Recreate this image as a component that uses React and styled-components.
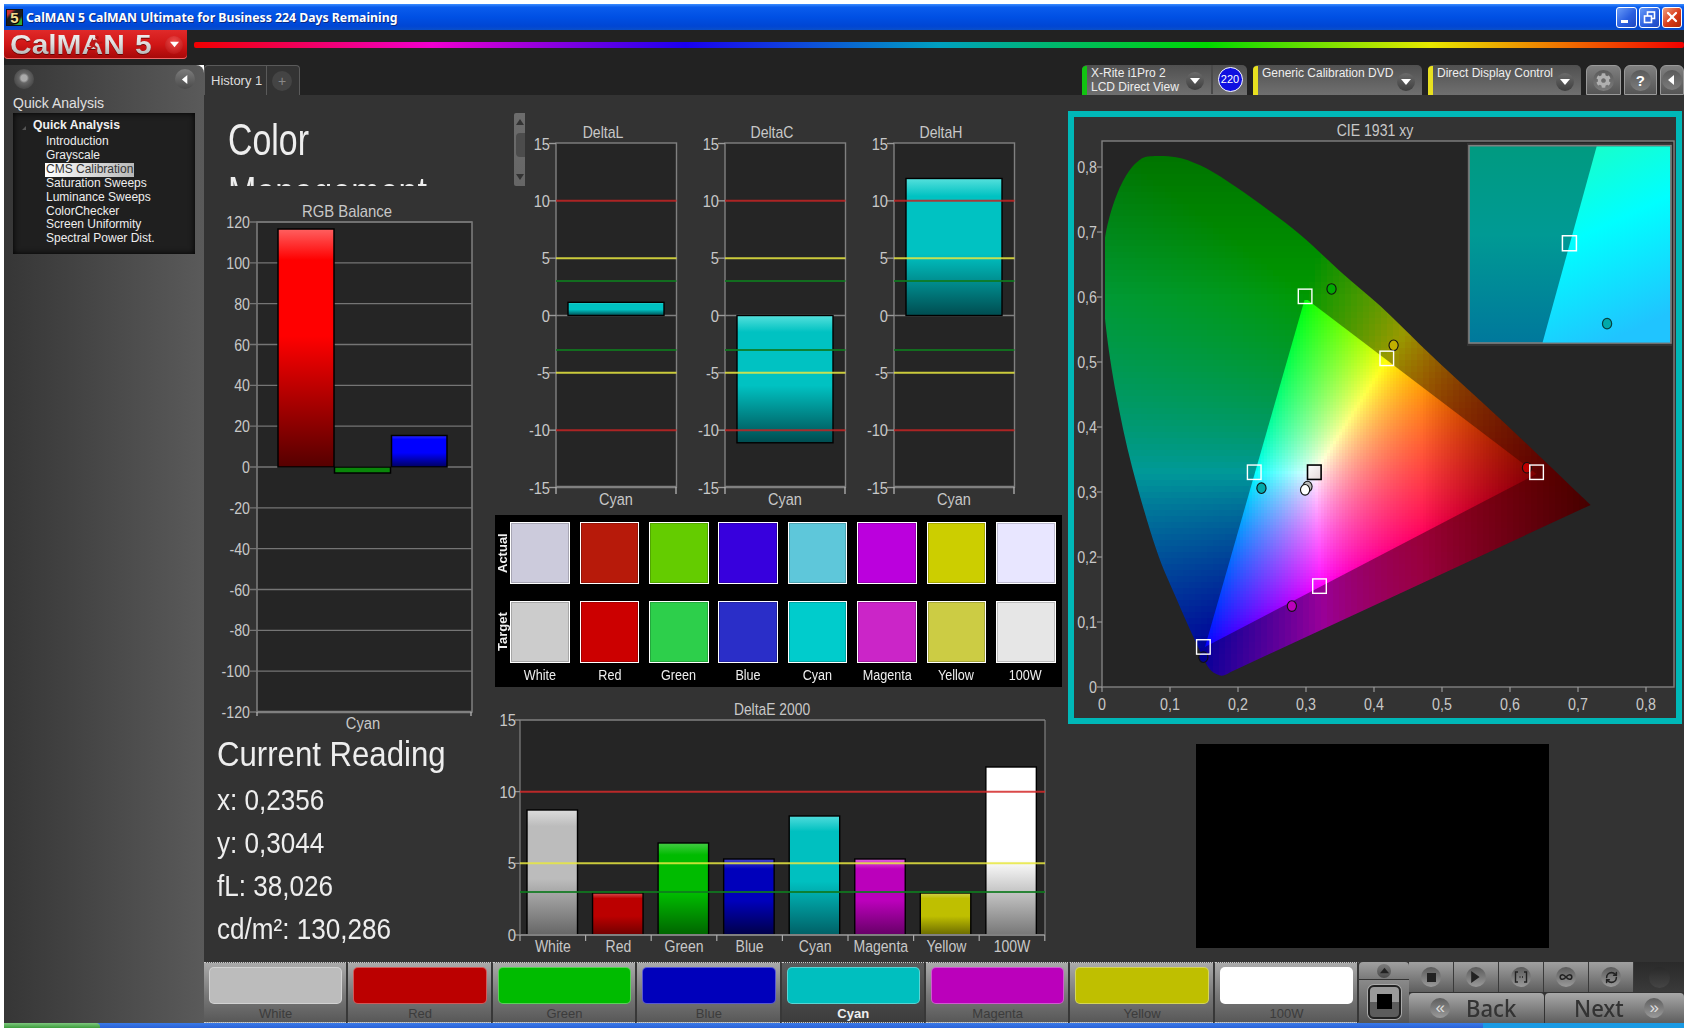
import React, { useMemo } from "react";
import styled, { createGlobalStyle } from "styled-components";
import { Infinity as InfinityIcon, RefreshCw, X } from "lucide-react";
import { FaCog } from "react-icons/fa";

const GlobalStyle = createGlobalStyle`
  html, body { margin: 0; padding: 0; background: #fff; }
  * { box-sizing: border-box; }
  body { font-family: "Liberation Sans", Arial, sans-serif; }
`;

const Page = styled.div`
  width: 1688px;
  height: 1028px;
  padding: 4px 4px 0;
  display: flex;
  flex-direction: column;
  background: #fff;
  overflow: hidden;
`;

const TitleBar = styled.div`
  height: 26px;
  flex: none;
  display: flex;
  align-items: center;
  padding: 0 2px 0 2px;
  background: linear-gradient(#3b8cff 0, #0a5cec 12%, #0050e4 50%, #0046d4 85%, #0a4fc8 100%);
`;

const AppIcon = styled.div`
  width: 17px;
  height: 17px;
  margin-right: 3px;
  background: linear-gradient(135deg, #c33 0 18%, #1c1c1c 32% 68%, #3a3 82% 100%);
  border: 1px solid #111;
  color: #f2dc90;
  font: 700 15px/15px "Liberation Sans", sans-serif;
  text-align: center;
  text-shadow: 1px 1px 0 #000;
`;

const TitleText = styled.div`
  flex: 1;
  color: #fff;
  font: 700 12.25px "Noto Sans", sans-serif;
  text-shadow: 1px 1px 0 #0a2a80;
  white-space: nowrap;
`;

const WinButton = styled.div`
  width: ${(p) => p.$w}px;
  height: 21px;
  margin-left: 2px;
  border: 1px solid #fff;
  border-radius: 3px;
  display: flex;
  align-items: center;
  justify-content: center;
  color: #fff;
  background: ${(p) => (p.$close ? "linear-gradient(135deg,#f0a080,#d83a18 55%,#b02808)" : "linear-gradient(135deg,#6a9cf8,#2a5fe0 55%,#2048c0)")};
`;

const LogoRow = styled.div`
  height: 35px;
  flex: none;
  display: flex;
  background: #222;
`;

const Logo = styled.div`
  width: 183px;
  height: 29px;
  display: flex;
  align-items: center;
  position: relative;
  padding-left: 6px;
  border-radius: 0 0 4px 4px;
  background: linear-gradient(#e02a2a, #d01616 50%, #a40808);
  box-shadow: inset 0 -1px 0 #e66;
`;

const LogoText = styled.div`
  width: ${(p) => p.$w}px;
  font: 700 28px/29px "Liberation Sans", sans-serif;
  white-space: nowrap;
  transform-origin: left center;
  transform: scaleX(1.07);
  background: linear-gradient(#f4f4f4, #e0e0e0 45%, #a8a8a8);
  -webkit-background-clip: text;
  background-clip: text;
  color: transparent;
  filter: drop-shadow(0 1px 0 rgba(90, 0, 0, 0.8));
`;

const LogoRunner = styled.svg`
  position: absolute;
  left: 83px;
  top: 5px;
`;

const LogoKnob = styled.div`
  width: 18px;
  height: 18px;
  margin-left: 10px;
  border-radius: 50%;
  background: radial-gradient(circle at 50% 30%, #f04a4a, #b00a0a);
  display: flex;
  align-items: center;
  justify-content: center;
`;

const Rainbow = styled.div`
  flex: 1;
  height: 6px;
  margin: 12px 0 0 7px;
  border-radius: 2px;
  background: linear-gradient(90deg, #f00000, #f000d0 16%, #1a00f0 33%, #00a0c0 50%, #00d800 68%, #e8e800 83%, #f07000 92%, #f00000);
`;

const Body = styled.div`
  flex: 1;
  display: flex;
  min-height: 0;
`;

const LeftPanel = styled.div`
  width: 200px;
  flex: none;
  padding: 4px 9px 0;
  border-radius: 0 8px 0 0;
  background: linear-gradient(90deg, #363636, #5a5a5a);
`;

const PanelTop = styled.div`
  height: 20px;
  display: flex;
  justify-content: space-between;
`;

const Knob = styled.div`
  width: ${(p) => p.$size || 20}px;
  height: ${(p) => p.$size || 20}px;
  flex: none;
  border-radius: 50%;
  display: flex;
  align-items: center;
  justify-content: center;
  background: linear-gradient(#7c7c7c, #4a4a4a);
  color: ${(p) => p.$ink || "#fff"};
`;

const PanelDot = styled(Knob)`
  background: radial-gradient(circle at 50% 45%, #aaa 0 3px, #666 5px, #4c4c4c 10px);
  margin-left: 1px;
`;

const PanelLabel = styled.div`
  margin-top: 5px;
  color: #e0e0e0;
  font-size: 14px;
  line-height: 18px;
`;

const TreeBox = styled.div`
  width: 182px;
  height: 141px;
  margin-top: 1px;
  padding: 2px 0 0 20px;
  background: #1f1f1f;
  box-shadow: inset 0 0 6px #000;
  position: relative;
`;

const TreeHead = styled.div`
  color: #f0f0f0;
  font-size: 12.2px;
  font-weight: 700;
  line-height: 20px;
  &::before {
    content: "";
    position: absolute;
    left: 9px;
    top: 13px;
    border-left: 4px solid transparent;
    border-bottom: 4px solid #555;
  }
`;

const TreeItem = styled.div`
  width: fit-content;
  margin-left: 12px;
  padding: 0 1px;
  color: ${(p) => (p.$on ? "#333" : "#eee")};
  font-size: 12px;
  line-height: 13.9px;
  white-space: nowrap;
  background: ${(p) => (p.$on ? "linear-gradient(90deg,#fff,#b8b8b8)" : "none")};
`;

const Main = styled.div`
  flex: 1;
  min-width: 0;
  display: flex;
  flex-direction: column;
`;

const TabStrip = styled.div`
  height: 30px;
  flex: none;
  display: flex;
  background: #222;
`;

const HistoryTab = styled.div`
  width: 96px;
  margin-right: 782px;
  display: flex;
  align-items: center;
  border: 1px solid #5a5a5a;
  border-bottom: 0;
  border-radius: 4px 4px 0 0;
  background: #333;
`;

const HistoryLabel = styled.div`
  width: 62px;
  height: 100%;
  padding-left: 6px;
  border-right: 1px solid #5a5a5a;
  color: #ddd;
  font-size: 13px;
  line-height: 30px;
  white-space: nowrap;
`;

const PlusKnob = styled(Knob)`
  margin-left: 5px;
  background: #444;
  color: #888;
  font-size: 14px;
`;

const DeviceTab = styled.div`
  width: ${(p) => p.$w}px;
  margin-right: 6px;
  padding: 1px 0 0 9px;
  display: flex;
  position: relative;
  border-radius: 5px 5px 0 0;
  background: linear-gradient(#505050, #707070);
  color: #eee;
  font-size: 12px;
  line-height: 14px;
  &::before {
    content: "";
    position: absolute;
    left: 0;
    top: 1px;
    bottom: 0;
    width: 5px;
    border-radius: 4px 0 0 0;
    background: ${(p) => p.$bar};
  }
`;

const DeviceText = styled.div`
  flex: 1;
  white-space: nowrap;
`;

const DeviceKnob = styled(Knob)`
  margin: ${(p) => p.$top || 6}px 7px 0 0;
  background: linear-gradient(#6a6a6a, #3e3e3e);
`;

const CountCell = styled.div`
  width: 36px;
  flex: none;
  height: 100%;
  margin-top: -1px;
  border-left: 2px solid #4a4a4a;
  display: flex;
  align-items: center;
  justify-content: center;
`;

const CountBadge = styled.div`
  width: 25px;
  height: 25px;
  border-radius: 50%;
  border: 1px solid #fff;
  background: #1010e0;
  color: #fff;
  font-size: 11px;
  line-height: 23px;
  text-align: center;
`;

const ToolButton = styled.div`
  width: ${(p) => p.$w}px;
  margin-left: ${(p) => p.$gap}px;
  display: flex;
  align-items: center;
  justify-content: center;
  border: 1px solid #9a9a9a;
  border-radius: 6px 6px 0 0;
  background: linear-gradient(#808080, #555);
`;

const ToolKnob = styled(Knob)`
  background: linear-gradient(#5a5a5a, #7c7c7c);
  font-size: 15px;
  font-weight: 700;
`;

const Content = styled.div`
  flex: 1;
  min-height: 0;
  display: grid;
  grid-template-columns: 286px 576px 1fr;
  background: #333;
`;

const Column = styled.div`
  display: flex;
  flex-direction: column;
  min-width: 0;
`;

const Squeezed = styled.span`
  display: inline-block;
  white-space: nowrap;
  transform-origin: ${(p) => p.$origin || "left"} center;
  transform: scaleX(${(p) => p.$sx});
`;

const Heading = styled.div`
  height: 73px;
  margin-top: 18px;
  padding-left: 24px;
  overflow: hidden;
  color: #eee;
  font-size: 44px;
  font-weight: 400;
  line-height: 53px;
`;

const ReadingTitle = styled.div`
  padding-left: 13px;
  margin-top: 1px;
  color: #eee;
  font-size: 35px;
  line-height: 36px;
`;

const ReadingLine = styled.div`
  height: 43px;
  padding-left: 13px;
  color: #eee;
  font-size: 29px;
  line-height: 43px;
`;

const Readings = styled.div`
  margin-top: 7px;
`;

const DeltaRow = styled.div`
  height: 420px;
  display: flex;
  align-items: flex-start;
`;

const ScrollThumb = styled.div`
  width: 11px;
  height: 73px;
  margin: 18px 0 0 24px;
  flex: none;
  border-radius: 2px 0 0 2px;
  background: linear-gradient(#6c6c6c, #666);
  display: flex;
  flex-direction: column;
  align-items: center;
  justify-content: space-between;
  padding: 6px 0;
  position: relative;
  &::after {
    content: "";
    position: absolute;
    left: 2px;
    top: 20px;
    width: 9px;
    height: 24px;
    border-radius: 4px 0 0 4px;
    background: #4c4c4c;
  }
`;

const ScrollArrow = styled.div`
  border-left: 4px solid transparent;
  border-right: 4px solid transparent;
  border-bottom: ${(p) => (p.$up ? "6px solid #333" : "0")};
  border-top: ${(p) => (p.$up ? "0" : "6px solid #333")};
`;

const ChartSvg = styled.svg`
  display: block;
  flex: none;
`;

const ChartLabel = styled.text`
  fill: #c8c8c8;
  font-family: "Liberation Sans", sans-serif;
`;

const SwatchPanel = styled.div`
  width: 567px;
  height: 172px;
  margin-left: 5px;
  padding-top: 7px;
  display: grid;
  grid-template-columns: 15.3px 1fr;
  background: #000;
`;

const RowLabels = styled.div`
  display: grid;
  grid-template-rows: 62px 62px;
  row-gap: 17px;
`;

const RowLabel = styled.div`
  writing-mode: vertical-rl;
  transform: rotate(180deg);
  color: #eee;
  font-size: 13px;
  font-weight: 700;
  line-height: 15px;
  text-align: center;
`;

const SwatchGrid = styled.div`
  display: grid;
  grid-template-columns: repeat(8, 59.5px);
  grid-template-rows: 62px 62px 20px;
  column-gap: 9.9px;
  row-gap: 17px;
`;

const Swatch = styled.div`
  border: 1px solid #fff;
  box-shadow: inset 0 0 0 1px rgba(0, 0, 0, 0.18);
  background: ${(p) => p.$c};
`;

const SwatchName = styled.div`
  margin-top: -15px;
  height: 20px;
  color: #eee;
  font-size: 14px;
  line-height: 20px;
  display: flex;
  justify-content: center;
`;

const CieFrame = styled.div`
  width: 613.5px;
  height: 613px;
  margin: 16px 0 0 2px;
  border: 6px solid #00b8b8;
`;

const VideoBox = styled.div`
  width: 353px;
  height: 204px;
  margin: 20px 0 0 130px;
  background: #000;
`;

const BottomBar = styled.div`
  height: 61px;
  flex: none;
  display: flex;
  background: #333;
`;

const PatchButton = styled.div`
  width: 144.4px;
  flex: none;
  padding: 4px 4px 0 5px;
  border-top: 1px dotted #ccc;
  border-bottom: 1px dotted #ccc;
  border-right: 2px solid #383838;
  background: ${(p) => (p.$on ? "linear-gradient(#5c5c5c, #3c3c3c)" : "linear-gradient(#aaa, #787878 55%, #585858)")};
`;

const PatchColor = styled.div`
  height: 37px;
  border-radius: 5px;
  border: 1px solid rgba(255, 255, 255, 0.35);
  background: ${(p) => p.$c};
`;

const PatchName = styled.div`
  height: 19px;
  color: ${(p) => (p.$on ? "#eee" : "#3c3c3c")};
  font-size: 13px;
  font-weight: ${(p) => (p.$on ? 700 : 400)};
  line-height: 19px;
  display: flex;
  justify-content: center;
`;

const ModeColumn = styled.div`
  width: 50px;
  flex: none;
  display: flex;
  flex-direction: column;
`;

const ModeTop = styled.div`
  height: 18px;
  display: flex;
  align-items: center;
  justify-content: center;
  border-radius: 4px 4px 0 0;
  background: linear-gradient(#a0a0a0, #7a7a7a);
  border-bottom: 1px solid #333;
`;

const ModeBottom = styled.div`
  flex: 1;
  display: flex;
  align-items: center;
  justify-content: center;
  background: linear-gradient(#8a8a8a, #555);
`;

const StopFrame = styled.div`
  width: 33px;
  height: 34px;
  border: 2px solid #222;
  border-radius: 6px;
  background: linear-gradient(#9a9a9a 0 50%, #5c5c5c 50% 100%);
  box-shadow: 0 0 0 1px #aaa;
  display: flex;
  align-items: center;
  justify-content: center;
  &::after {
    content: "";
    width: 15px;
    height: 15px;
    background: #000;
  }
`;

const Transport = styled.div`
  flex: 1;
  display: flex;
  flex-direction: column;
`;

const TransportTop = styled.div`
  height: 30px;
  display: flex;
`;

const TransportButton = styled.div`
  width: 45px;
  display: flex;
  align-items: center;
  justify-content: center;
  border-right: 1px solid #3a3a3a;
  background: linear-gradient(#a0a0a0, #5e5e5e);
`;

const TransportKnob = styled(Knob)`
  background: linear-gradient(#5a5a5a, #9a9a9a);
`;

const TransportSlot = styled.div`
  flex: 1;
  display: flex;
  align-items: center;
  justify-content: center;
  background: linear-gradient(#2a2a2a, #3a3a3a);
`;

const SlotDot = styled.div`
  width: 21px;
  height: 21px;
  border-radius: 50%;
  background: linear-gradient(#2a2a2a, #454545);
`;

const NavRow = styled.div`
  flex: 1;
  display: flex;
  gap: 1px;
  margin-top: 1px;
`;

const NavButton = styled.div`
  width: ${(p) => p.$w}px;
  display: flex;
  align-items: center;
  padding-left: ${(p) => p.$pad}px;
  border-radius: 4px 4px 0 0;
  background: linear-gradient(#a8a8a8, #5e5e5e);
  color: #333;
  font: 500 24px/30px "Noto Sans", sans-serif;
`;

const NavKnob = styled(Knob)`
  background: linear-gradient(#5e5e5e, #9a9a9a);
  color: #ddd;
  font: 400 17px/18px "Liberation Sans", sans-serif;
`;

const NavLabel = styled(Squeezed)`
  width: ${(p) => p.$w}px;
  margin-left: ${(p) => p.$left || 0}px;
`;

const TaskBar = styled.div`
  height: 5px;
  flex: none;
  display: flex;
  background: linear-gradient(#3a7ae8, #2a62d8);
`;

const StartButton = styled.div`
  width: 96px;
  background: linear-gradient(#7ec87e, #3c9c3c);
  border-radius: 0 4px 0 0;
`;

const TaskGap = styled.div`
  flex: 1;
`;

const TrayArea = styled.div`
  width: 201px;
  background: #1a9ae4;
`;

const Arrow = ({ dir = "left", size = 8, color = "#fff" }) => {
  const pts = {
    left: "7,0 7,10 1,5",
    right: "1,0 1,10 8,5",
    down: "0,2 10,2 5,8",
    up: "0,8 10,8 5,2",
  };
  return (
    <svg width={size} height={size} viewBox="0 0 10 10">
      <polygon points={pts[dir]} fill={color} />
    </svg>
  );
};

// svg text, narrowed a little like the charts in the app
const Txt = ({ x, y, sx = 0.88, size = 15, anchor = "middle", children }) => (
  <ChartLabel transform={`translate(${x} ${y}) scale(${sx} 1)`} textAnchor={anchor} fontSize={size}>
    {children}
  </ChartLabel>
);

const BarGradient = ({ id, hi, c, lo, mid = 0.55 }) => (
  <linearGradient id={id} x1="0" y1="0" x2="0" y2="1">
    <stop offset="0" stopColor={hi} />
    <stop offset="0.13" stopColor={c} />
    <stop offset={mid} stopColor={c} />
    <stop offset="1" stopColor={lo} />
  </linearGradient>
);

const CYAN = { hi: "#55e0dc", c: "#00c2c2", lo: "#004c50" };

const rgbTicks = [120, 100, 80, 60, 40, 20, 0, -20, -40, -60, -80, -100, -120];

const RgbChart = () => {
  const y = (v) => 467 - (v / 120) * 245;
  return (
    <ChartSvg width="286" height="549" viewBox="204 186 286 549">
      <defs>
        <BarGradient id="rgbRed" hi="#ff6060" c="#ff0000" lo="#550000" mid={0.45} />
        <BarGradient id="rgbBlue" hi="#2a2aff" c="#0000ff" lo="#000060" />
      </defs>
      <Txt x={347} y={217} sx={0.93} size={16}>RGB Balance</Txt>
      <rect x="257" y="222" width="215" height="490" fill="#252525" stroke="#808080" strokeWidth="1.5" />
      {rgbTicks.map((t) => (
        <g key={t}>
          <line x1="250" x2="472" y1={y(t)} y2={y(t)} stroke="#757575" strokeWidth="1.4" />
          <Txt x={250} y={y(t) + 6} sx={0.86} size={16.5} anchor="end">{t}</Txt>
        </g>
      ))}
      <line x1="257" x2="472" y1="712" y2="712" stroke="#808080" strokeWidth="2.4" />
      <line x1="257" x2="257" y1="712" y2="716" stroke="#aaa" strokeWidth="1.4" />
      <line x1="471" x2="471" y1="712" y2="716" stroke="#aaa" strokeWidth="1.4" />
      <rect x="278" y="229" width="56" height="238" fill="url(#rgbRed)" stroke="#000" strokeWidth="1.5" />
      <rect x="334.5" y="467" width="56" height="6" fill="#0a860a" stroke="#000" strokeWidth="1.5" />
      <rect x="391.5" y="435.5" width="55.5" height="31.5" fill="url(#rgbBlue)" stroke="#000" strokeWidth="1.5" />
      <Txt x={363} y={729} sx={0.92} size={16}>Cyan</Txt>
    </ChartSvg>
  );
};

const deltaTicks = [15, 10, 5, 0, -5, -10, -15];

const Limit = ({ x1, x2, y, color }) => <line x1={x1} x2={x2} y1={y} y2={y} stroke={color} strokeWidth="2" opacity="0.85" />;

const DeltaChart = ({ name, value }) => {
  const y = (v) => 315.5 - (v / 15) * 172;
  const top = Math.min(y(value), y(0));
  const h = Math.abs(y(value) - y(0));
  const id = `bar${name}`;
  return (
    <ChartSvg width="169" height="420" viewBox="0 95 169 420">
      <defs>
        <BarGradient id={id} {...CYAN} />
      </defs>
      <Txt x={78} y={137.5} size={16}>{name}</Txt>
      <rect x="31" y="143" width="120.5" height="344" fill="#252525" stroke="#808080" strokeWidth="1.4" />
      {deltaTicks.map((t) => (
        <g key={t}>
          <line x1="24" x2="31" y1={y(t)} y2={y(t)} stroke="#999" strokeWidth="1.4" />
          <Txt x={25} y={y(t) + 6} size={17} sx={0.86} anchor="end">{t}</Txt>
        </g>
      ))}
      <line x1="31" x2="151.5" y1={y(0)} y2={y(0)} stroke="#808080" strokeWidth="1.4" />
      <rect x="43" y={top} width="96" height={h} fill={`url(#${id})`} stroke="#000" strokeWidth="1.4" />
      <Limit x1={31} x2={151.5} y={y(10)} color="#c42424" />
      <Limit x1={31} x2={151.5} y={y(-10)} color="#c42424" />
      <Limit x1={31} x2={151.5} y={y(5)} color="#e8e840" />
      <Limit x1={31} x2={151.5} y={y(-5)} color="#e8e840" />
      <Limit x1={31} x2={151.5} y={y(3)} color="#0f7a1f" />
      <Limit x1={31} x2={151.5} y={y(-3)} color="#0f7a1f" />
      <line x1="31" x2="151.5" y1="487" y2="487" stroke="#808080" strokeWidth="2.4" />
      <line x1="31" x2="31" y1="487" y2="494" stroke="#aaa" strokeWidth="1.4" />
      <line x1="151" x2="151" y1="487" y2="494" stroke="#aaa" strokeWidth="1.4" />
      <Txt x={91} y={505} size={16.5} sx={0.88}>Cyan</Txt>
    </ChartSvg>
  );
};

const deltaEBars = [
  { name: "White", top: 810, hi: "#dcdcdc", c: "#bcbcbc", lo: "#666" },
  { name: "Red", top: 893, hi: "#d85050", c: "#bb0000", lo: "#700000" },
  { name: "Green", top: 843, hi: "#44cc44", c: "#00bb00", lo: "#006400" },
  { name: "Blue", top: 859, hi: "#4444cc", c: "#0000bb", lo: "#000048" },
  { name: "Cyan", top: 816, hi: "#50dcdc", c: "#00c0c0", lo: "#006066" },
  { name: "Magenta", top: 859, hi: "#e060e0", c: "#bb00bb", lo: "#660066" },
  { name: "Yellow", top: 893, hi: "#d0d050", c: "#bfbf00", lo: "#6a6a00" },
  { name: "100W", top: 767, hi: "#ffffff", c: "#ffffff", lo: "#777" },
];

const DeltaEChart = () => {
  const y = (v) => 935 - (v / 15) * 215;
  return (
    <ChartSvg width="576" height="275" viewBox="490 687 576 275">
      <defs>
        {deltaEBars.map((b) => (
          <BarGradient key={b.name} id={`de${b.name}`} hi={b.hi} c={b.c} lo={b.lo} />
        ))}
      </defs>
      <Txt x={772} y={715} size={16.5} sx={0.84}>DeltaE 2000</Txt>
      <rect x="520" y="720" width="525" height="215" fill="#252525" />
      <line x1="520" x2="1045" y1="720" y2="720" stroke="#808080" strokeWidth="1.6" />
      <line x1="1045" x2="1045" y1="720" y2="935" stroke="#808080" strokeWidth="1.2" />
      <line x1="520" x2="520" y1="720" y2="935" stroke="#808080" strokeWidth="1.2" />
      {[15, 10, 5, 0].map((t) => (
        <g key={t}>
          <line x1="515" x2="520" y1={y(t)} y2={y(t)} stroke="#999" strokeWidth="1.2" />
          <Txt x={516} y={y(t) + 6} size={16.5} sx={0.9} anchor="end">{t}</Txt>
        </g>
      ))}
      {deltaEBars.map((b, i) => {
        const x = 527 + i * 65.55;
        return (
          <g key={b.name}>
            <rect x={x} y={b.top} width="50.5" height={935 - b.top} fill={`url(#de${b.name})`} stroke="#000" strokeWidth="1.4" />
            <Txt x={552.8 + i * 65.6} y={951.5} size={16.5} sx={0.85}>{b.name}</Txt>
          </g>
        );
      })}
      <Limit x1={520} x2={1045} y={y(10)} color="#d42a2a" />
      <Limit x1={520} x2={1045} y={y(5)} color="#e8e840" />
      <Limit x1={520} x2={1045} y={y(3)} color="#0f7a1f" />
      <line x1="520" x2="1045" y1="935" y2="935" stroke="#808080" strokeWidth="2" />
      {Array.from({ length: 9 }).map((_, i) => (
        <line key={i} x1={520 + i * 65.6} x2={520 + i * 65.6} y1="935" y2="941" stroke="#aaa" strokeWidth="1.2" />
      ))}
    </ChartSvg>
  );
};

// chart coordinates on the page
const cx = (x) => 1102 + 680 * x;
const cy = (y) => 687 - 650 * y;
// spots read off the reference, in fractions of the chart
const zx = (v) => (1060 + v / 2.497 - 1102) / 680;
const zy = (v) => (687 - (100 + v / 2.45)) / 650;

const locusTrace = [
  [400, 1410], [372, 1392], [340, 1330], [290, 1220], [240, 1100], [180, 900], [140, 720], [115, 560],
  [108, 440], [112, 340], [135, 250], [165, 185], [195, 150], [225, 138], [290, 140], [350, 160],
  [420, 200], [500, 255], [600, 330], [700, 420], [800, 505], [900, 600], [1000, 692], [1100, 782],
  [1200, 875], [1325, 992],
].map(([a, b]) => [cx(zx(a)), cy(zy(b))]);

const smoothPath = (pts) => {
  let d = `M${pts[0][0]} ${pts[0][1]}`;
  for (let i = 0; i < pts.length - 1; i++) {
    const p0 = pts[Math.max(i - 1, 0)];
    const p1 = pts[i];
    const p2 = pts[i + 1];
    const p3 = pts[Math.min(i + 2, pts.length - 1)];
    d += `C${p1[0] + (p2[0] - p0[0]) / 6} ${p1[1] + (p2[1] - p0[1]) / 6} ${p2[0] - (p3[0] - p1[0]) / 6} ${p2[1] - (p3[1] - p1[1]) / 6} ${p2[0]} ${p2[1]}`;
  }
  // straight line of purples back to the start, with a small rounded foot
  const foot = [cx(zx(425)), cy(zy(1402))];
  return `${d}L${foot[0]} ${foot[1]}Q${cx(zx(410))} ${cy(zy(1412))} ${pts[0][0]} ${pts[0][1]}Z`;
};

const gamut = [
  [zx(612), zy(485)],
  [zx(1190), zy(916)],
  [zx(362), zy(1340)],
];

const inGamut = (x, y, pad = 0.006) => {
  const [a, b, c] = gamut;
  const side = (p, q) => ((q[0] - p[0]) * (y - p[1]) - (q[1] - p[1]) * (x - p[0])) / Math.hypot(q[0] - p[0], q[1] - p[1]);
  const s = [side(a, b), side(b, c), side(c, a)];
  return s.every((v) => v > -pad) || s.every((v) => v < pad);
};

const chroma = (x, y, inside) => {
  const z = 1 - x - y;
  const r = Math.max(3.24 * x - 1.54 * y - 0.5 * z, 0);
  const g = Math.max(-0.97 * x + 1.88 * y + 0.04 * z, 0);
  const b = Math.max(0.056 * x - 0.2 * y + 1.06 * z, 0);
  const m = Math.max(r, g, b, 0.001);
  let k = 1;
  if (x > 0.47) k *= 1 - (x - 0.47) * (inside ? 3 : 2.2);
  if (!inside) {
    k *= 0.6;
    if (y > 0.6) k *= 1 - (y - 0.6) * 1.1;
  }
  const ch = (v) => Math.round(Math.pow(v / m, 0.8) * k * 255);
  return `rgb(${ch(r)},${ch(g)},${ch(b)})`;
};

const buildCells = () => {
  const cells = [];
  for (let py = 150; py < 684; py += 6) {
    for (let px = 1105; px < 1595; px += 6) {
      const x = (px + 3 - 1102) / 680;
      const y = (687 - (py + 3)) / 650;
      if (x + y > 1.06) continue;
      cells.push(<rect key={`o${px}-${py}`} x={px} y={py} width="6.4" height="6.4" fill={chroma(x, y, false)} />);
    }
  }
  const inner = [];
  for (let py = 300; py < 650; py += 3) {
    for (let px = 1195; px < 1545; px += 3) {
      const x = (px + 1.5 - 1102) / 680;
      const y = (687 - (py + 1.5)) / 650;
      if (!inGamut(x, y)) continue;
      inner.push(<rect key={`i${px}-${py}`} x={px} y={py} width="3.4" height="3.4" fill={chroma(x, y, true)} />);
    }
  }
  return { cells, inner };
};

const squares = [
  [612, 481], [816, 633], [485, 912], [1190, 912], [648, 1191], [358, 1340],
];

const dots = [
  [678, 463, "#00aa00"], [833, 601, "#c0b000"], [503, 951, "#00aaaa"], [1166, 901, "#bb0000"],
  [579, 1240, "#bb00bb"], [358, 1365, "#000090"], [618, 947, "#bbbbbb"], [612, 955, "#ffffff"],
];

const rx = (v) => 1060 + v / 2.497;
const ry = (v) => 100 + v / 2.45;

const CieChart = () => {
  const { cells, inner } = useMemo(buildCells, []);
  const triPoints = gamut.map(([x, y]) => `${cx(x)},${cy(y)}`).join(" ");
  return (
    <ChartSvg width="601.5" height="601" viewBox="1074 117 601.5 601">
      <defs>
        <clipPath id="locus">
          <path d={smoothPath(locusTrace)} />
        </clipPath>
        <clipPath id="gamut">
          <polygon points={triPoints} />
        </clipPath>
        <linearGradient id="insetDark" x1="0" y1="0" x2="0" y2="1">
          <stop offset="0" stopColor="#009a80" />
          <stop offset="0.45" stopColor="#009a94" />
          <stop offset="1" stopColor="#00789c" />
        </linearGradient>
        <linearGradient id="insetBright" x1="0.2" y1="0" x2="0.5" y2="1">
          <stop offset="0" stopColor="#1affc4" />
          <stop offset="0.45" stopColor="#00ffff" />
          <stop offset="1" stopColor="#20c4ff" />
        </linearGradient>
        <linearGradient id="whiteSquare" x1="0" y1="0" x2="1" y2="1">
          <stop offset="0" stopColor="#fff" />
          <stop offset="1" stopColor="#e4d8d8" />
        </linearGradient>
      </defs>
      <Txt x={1375} y={136} size={16} sx={0.88}>CIE 1931 xy</Txt>
      <rect x="1102" y="141" width="572" height="546" fill="#252525" stroke="#808080" strokeWidth="1.4" />
      {[0, 1, 2, 3, 4, 5, 6, 7, 8].map((t) => {
        const label = t === 0 ? "0" : `0,${t}`;
        return (
          <g key={t}>
            <line x1="1097" x2="1102" y1={cy(t / 10)} y2={cy(t / 10)} stroke="#999" strokeWidth="1.2" />
            <Txt x={1097} y={cy(t / 10) + 6} size={17} sx={0.84} anchor="end">{label}</Txt>
            <line x1={cx(t / 10)} x2={cx(t / 10)} y1="687" y2="692" stroke="#999" strokeWidth="1.2" />
            <Txt x={cx(t / 10)} y={710} size={17} sx={0.84}>{label}</Txt>
          </g>
        );
      })}
      <g clipPath="url(#locus)" shapeRendering="crispEdges">{cells}</g>
      <g clipPath="url(#gamut)" shapeRendering="crispEdges">{inner}</g>

      <rect x="1467" y="143" width="205" height="203" fill="#333" />
      <rect x="1469" y="145.7" width="202" height="197.3" fill="url(#insetDark)" stroke="#808080" strokeWidth="1.6" />
      <polygon points={`${rx(1340)},146.5 1670,146.5 1670,342.5 ${rx(1205)},342.5`} fill="url(#insetBright)" />
      <rect x={rx(1272) - 7} y={ry(351) - 7.5} width="14" height="15" fill="none" stroke="#fff" strokeWidth="1.5" />
      <ellipse cx={rx(1366)} cy={ry(548)} rx="4.6" ry="5.3" fill="#00aaaa" stroke="#064040" strokeWidth="1.2" />

      {dots.map(([a, b, c]) => (
        <ellipse key={`${a}-${b}`} cx={rx(a)} cy={ry(b)} rx="4.6" ry="5.3" fill={c} stroke="#111" strokeWidth="1.1" />
      ))}
      {squares.map(([a, b]) => (
        <rect key={`${a}-${b}`} x={rx(a) - 6.8} y={ry(b) - 7.2} width="13.6" height="14.4" fill="none" stroke="#fff" strokeWidth="1.4" />
      ))}
      <rect x={rx(635) - 6.8} y={ry(912) - 7.2} width="13.6" height="14.4" fill="url(#whiteSquare)" stroke="#000" strokeWidth="1.6" />
    </ChartSvg>
  );
};

const actual = ["#cccbdc", "#b71a0a", "#64cc00", "#3700dd", "#5ec7da", "#bb00dd", "#ccce00", "#e8e6ff"];
const target = ["#cccccc", "#cc0000", "#2dcf4b", "#2a2ec8", "#00cccc", "#cb25c8", "#cccc44", "#e6e6e6"];
const patchNames = ["White", "Red", "Green", "Blue", "Cyan", "Magenta", "Yellow", "100W"];
const patchColors = ["#bcbcbc", "#bb0000", "#00bb00", "#0000bb", "#00bfbf", "#bb00bb", "#bfbf00", "#ffffff"];
const steps = ["Introduction", "Grayscale", "CMS Calibration", "Saturation Sweeps", "Luminance Sweeps", "ColorChecker", "Screen Uniformity", "Spectral Power Dist."];
const readings = ["x: 0,2356", "y: 0,3044", "fL: 38,026", "cd/m²: 130,286"];

export default function App() {
  return (
    <Page>
      <GlobalStyle />
      <TitleBar>
        <AppIcon>5</AppIcon>
        <TitleText>CalMAN 5 CalMAN Ultimate for Business 224 Days Remaining</TitleText>
        <WinButton $w={21}>
          <svg width="15" height="15" viewBox="0 0 15 15"><rect x="2" y="10" width="7" height="3" fill="#fff" /></svg>
        </WinButton>
        <WinButton $w={21}>
          <svg width="15" height="15" viewBox="0 0 15 15" fill="none" stroke="#fff" strokeWidth="1.4">
            <rect x="5.5" y="2" width="7" height="6.5" strokeWidth="1.6" />
            <rect x="2.5" y="6" width="7" height="6.5" fill="#3568e4" strokeWidth="1.6" />
          </svg>
        </WinButton>
        <WinButton $w={20} $close><X size={16} strokeWidth={3.4} /></WinButton>
      </TitleBar>
      <LogoRow>
        <Logo>
          <LogoText $w={125}>CalMAN</LogoText>
          <LogoText $w={20}>5</LogoText>
          <LogoRunner width="16" height="18" viewBox="0 0 16 18" fill="none" stroke="#b81818" strokeWidth="2" strokeLinecap="round">
            <circle cx="10" cy="2.5" r="1.8" fill="#b81818" stroke="none" />
            <path d="M8.5 5.5 L6.5 10.5 L9.5 13 L9 17 M6.5 10.5 L3.5 13 L0.8 13 M8.5 5.5 L11.5 8 L14.5 7.5 M8.5 5.5 L5 6.5 L3.5 9" />
          </LogoRunner>
          <LogoKnob><Arrow dir="down" size={9} /></LogoKnob>
        </Logo>
        <Rainbow />
      </LogoRow>
      <Body>
        <LeftPanel>
          <PanelTop>
            <PanelDot />
            <Knob $size={20}><Arrow dir="left" size={9} /></Knob>
          </PanelTop>
          <PanelLabel>Quick Analysis</PanelLabel>
          <TreeBox>
            <TreeHead>Quick Analysis</TreeHead>
            {steps.map((s) => (
              <TreeItem key={s} $on={s === "CMS Calibration"}>{s}</TreeItem>
            ))}
          </TreeBox>
        </LeftPanel>
        <Main>
          <TabStrip>
            <HistoryTab>
              <HistoryLabel>History 1</HistoryLabel>
              <PlusKnob>+</PlusKnob>
            </HistoryTab>
            <DeviceTab $w={165} $bar="#12c412">
              <DeviceText>X-Rite i1Pro 2<br />LCD Direct View</DeviceText>
              <DeviceKnob $size={18} $top={6}><Arrow dir="down" size={10} /></DeviceKnob>
              <CountCell><CountBadge>220</CountBadge></CountCell>
            </DeviceTab>
            <DeviceTab $w={169} $bar="#e8e020">
              <DeviceText>Generic Calibration DVD</DeviceText>
              <DeviceKnob $size={18} $top={7}><Arrow dir="down" size={10} /></DeviceKnob>
            </DeviceTab>
            <DeviceTab $w={153} $bar="#e8e020">
              <DeviceText>Direct Display Control</DeviceText>
              <DeviceKnob $size={18} $top={7}><Arrow dir="down" size={10} /></DeviceKnob>
            </DeviceTab>
            <ToolButton $w={35} $gap={-1}><ToolKnob $size={21} $ink="#b0b0b0"><FaCog size={15} /></ToolKnob></ToolButton>
            <ToolButton $w={33.5} $gap={2.5}><ToolKnob $size={21}>?</ToolKnob></ToolButton>
            <ToolButton $w={24} $gap={3}><ToolKnob $size={20}><Arrow dir="left" size={10} /></ToolKnob></ToolButton>
          </TabStrip>
          <Content>
            <Column>
              <Heading>
                <Squeezed $sx={0.77}>Color</Squeezed>
                <br />
                <Squeezed $sx={0.775}>Management</Squeezed>
              </Heading>
              <RgbChart />
              <ReadingTitle><Squeezed $sx={0.89}>Current Reading</Squeezed></ReadingTitle>
              <Readings>
                {readings.map((r) => (
                  <ReadingLine key={r}><Squeezed $sx={0.9}>{r}</Squeezed></ReadingLine>
                ))}
              </Readings>
            </Column>
            <Column>
              <DeltaRow>
                <ScrollThumb>
                  <ScrollArrow $up />
                  <ScrollArrow />
                </ScrollThumb>
                <DeltaChart name="DeltaL" value={1.15} />
                <DeltaChart name="DeltaC" value={-11.1} />
                <DeltaChart name="DeltaH" value={11.95} />
              </DeltaRow>
              <SwatchPanel>
                <RowLabels>
                  <RowLabel>Actual</RowLabel>
                  <RowLabel>Target</RowLabel>
                </RowLabels>
                <SwatchGrid>
                  {actual.map((c) => <Swatch key={c} $c={c} />)}
                  {target.map((c) => <Swatch key={c} $c={c} />)}
                  {patchNames.map((n) => (
                    <SwatchName key={n}><Squeezed $sx={0.9} $origin="center">{n}</Squeezed></SwatchName>
                  ))}
                </SwatchGrid>
              </SwatchPanel>
              <DeltaEChart />
            </Column>
            <Column>
              <CieFrame>
                <CieChart />
              </CieFrame>
              <VideoBox />
            </Column>
          </Content>
          <BottomBar>
            {patchNames.map((n, i) => (
              <PatchButton key={n} $on={n === "Cyan"}>
                <PatchColor $c={patchColors[i]} />
                <PatchName $on={n === "Cyan"}>{n}</PatchName>
              </PatchButton>
            ))}
            <ModeColumn>
              <ModeTop><Knob $size={14}><Arrow dir="up" size={9} color="#222" /></Knob></ModeTop>
              <ModeBottom><StopFrame /></ModeBottom>
            </ModeColumn>
            <Transport>
              <TransportTop>
                <TransportButton><TransportKnob $size={20}><svg width="9" height="9"><rect width="9" height="9" fill="#222" /></svg></TransportKnob></TransportButton>
                <TransportButton><TransportKnob $size={20}><Arrow dir="right" size={12} color="#222" /></TransportKnob></TransportButton>
                <TransportButton><TransportKnob $size={20}><svg width="14" height="14" viewBox="0 0 14 14" fill="none" stroke="#222" strokeWidth="1.4"><path d="M4 2H1.5V12H4M10 2H12.5V12H10" /><path d="M5.5 7h1M8 7h1" /></svg></TransportKnob></TransportButton>
                <TransportButton><TransportKnob $size={20} $ink="#222"><InfinityIcon size={14} strokeWidth={2.6} /></TransportKnob></TransportButton>
                <TransportButton><TransportKnob $size={20} $ink="#222"><RefreshCw size={13} strokeWidth={2.8} /></TransportKnob></TransportButton>
                <TransportSlot><SlotDot /></TransportSlot>
              </TransportTop>
              <NavRow>
                <NavButton $w={135} $pad={21}>
                  <NavKnob $size={20}>«</NavKnob>
                  <NavLabel $sx={0.92} $w={50} $left={16}>Back</NavLabel>
                </NavButton>
                <NavButton $w={139} $pad={29}>
                  <NavLabel $sx={0.92} $w={70}>Next</NavLabel>
                  <NavKnob $size={20}>»</NavKnob>
                </NavButton>
              </NavRow>
            </Transport>
          </BottomBar>
        </Main>
      </Body>
      <TaskBar>
        <StartButton />
        <TaskGap />
        <TrayArea />
      </TaskBar>
    </Page>
  );
}
